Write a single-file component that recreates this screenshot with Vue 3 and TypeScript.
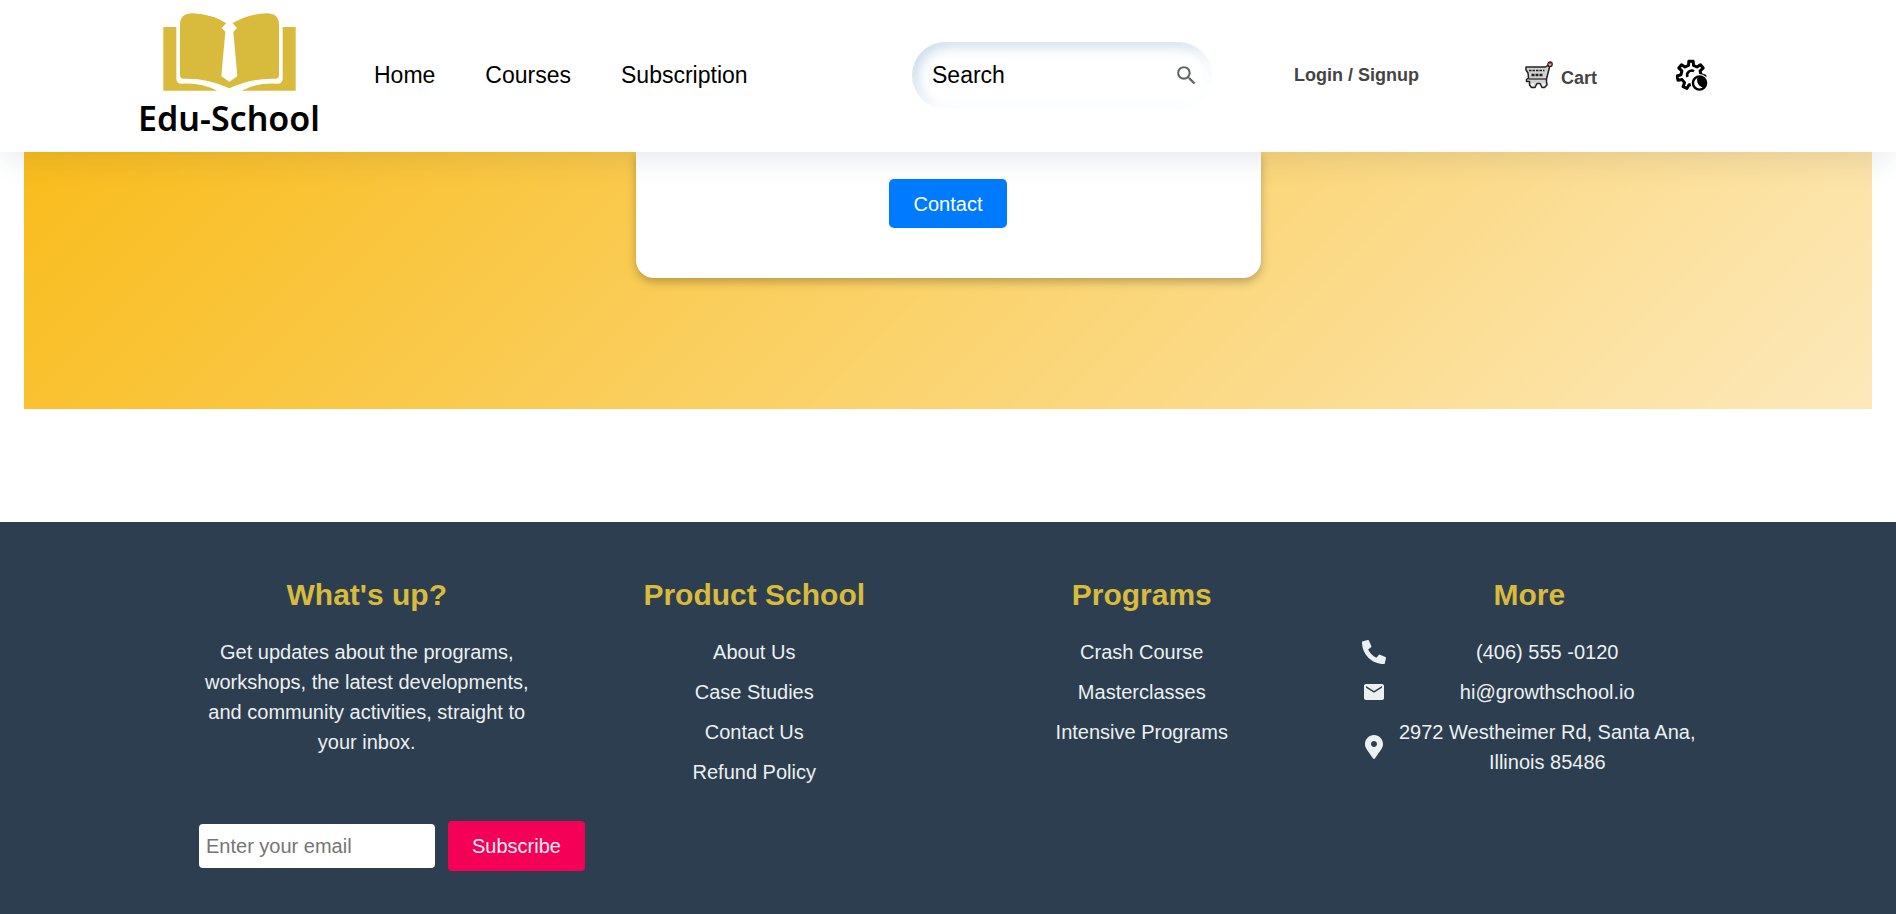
<script setup lang="ts">
import { ref } from 'vue'

interface LinkColumn {
  title: string
  links: string[]
}

const navLinks: string[] = ['Home', 'Courses', 'Subscription']

const columns: LinkColumn[] = [
  { title: 'Product School', links: ['About Us', 'Case Studies', 'Contact Us', 'Refund Policy'] },
  { title: 'Programs', links: ['Crash Course', 'Masterclasses', 'Intensive Programs'] },
]

const query = ref('')
const email = ref('')

// Outline of a cog with flat-topped teeth, centred on (cx, cy).
function cogPath(cx: number, cy: number, teeth: number, outer: number, inner: number): string {
  const step = (Math.PI * 2) / teeth
  const points: string[] = []
  for (let i = 0; i < teeth; i++) {
    const mid = -Math.PI / 2 + i * step
    const corners: [number, number][] = [
      [inner, -0.28],
      [outer, -0.17],
      [outer, 0.17],
      [inner, 0.28],
    ]
    for (const [radius, turn] of corners) {
      const angle = mid + turn * step
      points.push(`${(cx + radius * Math.cos(angle)).toFixed(2)} ${(cy + radius * Math.sin(angle)).toFixed(2)}`)
    }
  }
  return `M${points.join('L')}Z`
}

const cog = cogPath(15, 16, 7, 14, 10)
</script>

<template>
  <div class="page">
    <header class="header">
      <a class="brand" href="#">
        <svg class="brand-mark" viewBox="127 37 399 234" aria-hidden="true">
          <g fill="#d8ba3c">
            <path d="M128 79H167V234Q168 250 184 249Q240 245 290 270H128Z" />
            <path d="M525 79H486V234Q485 250 469 249Q412 245 363 270H525Z" />
            <path d="M178 72Q178 38 216 38Q276 40 326 73Q376 40 437 38Q475 38 475 72V222Q475 235 462 234Q390 232 326 263Q262 232 191 234Q178 235 178 222Z" />
          </g>
          <path fill="#fff" d="M303 82L317 67L326 73L335 67L349 82L338 93L350 227L326 243L302 227L314 93Z" />
        </svg>
        <span class="brand-name">Edu-School</span>
      </a>

      <nav class="nav">
        <a v-for="link in navLinks" :key="link" href="#">{{ link }}</a>
      </nav>

      <div class="tools">
        <form class="search" role="search" @submit.prevent>
          <input v-model="query" type="text" placeholder="Search" aria-label="Search" />
          <button type="submit" aria-label="Submit search">
            <svg viewBox="0 0 24 24" width="25" height="25" aria-hidden="true">
              <path fill="#5f6368" d="M15.5 14h-.79l-.28-.27A6.47 6.47 0 0 0 16 9.5 6.5 6.5 0 1 0 9.5 16c1.61 0 3.09-.59 4.23-1.57l.27.28v.79l5 4.99L20.49 19l-4.99-5zm-6 0C7.01 14 5 11.99 5 9.5S7.01 5 9.5 5 14 7.01 14 9.5 11.99 14 9.5 14z" />
            </svg>
          </button>
        </form>

        <a class="login" href="#">Login / Signup</a>

        <a class="cart" href="#">
          <svg viewBox="0 0 28 28" width="28" height="28" aria-hidden="true">
            <path fill="#d2d2d6" stroke="#222" stroke-width="1.5" stroke-linejoin="round" d="M1 6H20.5L22.5 4.500L24.500 6L21.500 18V20.500L22 24L19.500 26.500H17L15 22.500H12L10 26.500H6.500L4.500 24V20.500H1.500V18.500L3.500 17L3 12L1 9Z" />
            <path stroke="#222" stroke-width="1.500" stroke-dasharray="2.500 1" d="M4 9.500H19.500" />
            <path stroke="#222" stroke-width="2.500" stroke-dasharray="3 1" d="M6.500 14H18" />
            <path stroke="#222" stroke-width="1.200" d="M3.500 18H21" />
            <circle cx="7.500" cy="23.500" r="1.500" fill="#f2f2f4" />
            <circle cx="18.500" cy="23.500" r="1.500" fill="#f2f2f4" />
            <circle cx="25" cy="3.200" r="2.200" fill="#f3b3a3" stroke="#222" stroke-width="1.300" />
            <path stroke="#e0452a" stroke-width="1.200" d="M23.500 2.500H26.500" />
          </svg>
          <span>Cart</span>
        </a>

        <button class="settings" type="button" aria-label="Theme settings">
          <svg viewBox="0 0 32 32" width="32" height="32" aria-hidden="true">
            <path :d="cog" fill="none" stroke="#000" stroke-width="3" stroke-linejoin="round" />
            <path d="M11.500 18A4.600 4.600 0 0 1 18 12.200" fill="none" stroke="#000" stroke-width="2.600" />
            <circle cx="23.500" cy="24" r="9" fill="#fff" />
            <circle cx="23.500" cy="24" r="6.600" fill="#fff" stroke="#000" stroke-width="2.400" />
            <path fill="#000" d="M21.500 17.700A6.600 6.600 0 0 1 28 28.800Q22.500 27.500 21.300 23Q20.700 20 21.500 17.700Z" />
          </svg>
        </button>
      </div>
    </header>

    <main class="main">
      <section class="hero">
        <div class="card">
          <button class="contact" type="button">Contact</button>
        </div>
      </section>
    </main>

    <footer class="footer">
      <div class="footer-grid">
        <section class="column">
          <h2>What's up?</h2>
          <p>Get updates about the programs, workshops, the latest developments, and community activities, straight to your inbox.</p>
          <form class="subscribe" @submit.prevent>
            <input v-model="email" type="email" placeholder="Enter your email" aria-label="Email address" />
            <button type="submit">Subscribe</button>
          </form>
        </section>

        <section v-for="column in columns" :key="column.title" class="column">
          <h2>{{ column.title }}</h2>
          <ul>
            <li v-for="link in column.links" :key="link"><a href="#">{{ link }}</a></li>
          </ul>
        </section>

        <section class="column">
          <h2>More</h2>
          <ul>
            <li class="contact-line">
              <svg viewBox="0 0 512 512" aria-hidden="true">
                <path d="M497.390 361.800l-112-48a24 24 0 0 0-28 6.900l-49.600 60.600A370.660 370.660 0 0 1 130.600 204.110l60.600-49.600a23.940 23.940 0 0 0 6.900-28l-48-112A24.160 24.160 0 0 0 122.600.610l-104 24A24 24 0 0 0 0 48c0 256.500 207.900 464 464 464a24 24 0 0 0 23.400-18.600l24-104a24.290 24.290 0 0 0-14.010-27.600z" />
              </svg>
              <span>(406) 555 -0120</span>
            </li>
            <li class="contact-line">
              <svg viewBox="0 0 24 24" aria-hidden="true">
                <path d="M20 4H4c-1.100 0-2 .9-2 2v12c0 1.100.9 2 2 2h16c1.100 0 2-.9 2-2V6c0-1.100-.9-2-2-2zm0 3.700l-8 5-8-5V6l8 5 8-5v1.700z" />
              </svg>
              <span>hi@growthschool.io</span>
            </li>
            <li class="contact-line">
              <svg viewBox="-64 0 512 512" aria-hidden="true">
                <path d="M172.268 501.670C26.970 291.031 0 269.413 0 192 0 85.961 85.961 0 192 0s192 85.961 192 192c0 77.413-26.970 99.031-172.268 309.670-9.535 13.774-29.930 13.773-39.464 0zM192 256c35 0 64-29 64-64s-29-64-64-64-64 29-64 64 29 64 64 64z" />
              </svg>
              <span>2972 Westheimer Rd, Santa Ana, Illinois 85486</span>
            </li>
          </ul>
        </section>
      </div>
    </footer>
  </div>
</template>

<style>
body {
  margin: 0;
  background: #fff;
}
</style>

<style scoped>
.page {
  display: flex;
  flex-direction: column;
  min-height: 100vh;
  font-family: 'Liberation Sans', Arial, sans-serif;
  font-size: 20px;
  line-height: 30px;
}

a {
  color: inherit;
  text-decoration: none;
}

button,
input {
  box-sizing: border-box;
  border: 0;
  font: inherit;
}

button {
  cursor: pointer;
}

.header {
  position: sticky;
  top: 0;
  z-index: 1;
  display: flex;
  align-items: center;
  box-sizing: border-box;
  height: 152px;
  padding: 0 188px 2px 136px;
  background: #fff;
  box-shadow: 0 13px 27px -5px rgba(50, 60, 90, 0.11);
}

.brand {
  display: flex;
  flex-direction: column;
  align-items: center;
  width: 186px;
  padding-top: 4px;
}

.brand-mark {
  display: block;
  width: 133px;
  height: 78px;
}

.brand-name {
  margin-top: 4px;
  color: #000;
  font-family: 'Noto Sans', sans-serif;
  font-size: 34px;
  font-weight: 600;
  line-height: 46px;
  white-space: nowrap;
}

.nav {
  display: flex;
  gap: 50px;
  margin-left: 52px;
  color: #000;
  font-size: 23px;
}

.tools {
  display: flex;
  align-items: center;
  margin-left: auto;
  color: #444;
  font-size: 18px;
  font-weight: 700;
  white-space: nowrap;
}

.search {
  display: flex;
  align-items: center;
  box-sizing: border-box;
  width: 300px;
  height: 67px;
  padding: 0 13px 0 20px;
  border-radius: 34px;
  font-size: 23px;
  font-weight: 400;
  box-shadow: inset -4px -4px 10px #fff, inset 4px 4px 14px #c5d7e8;
}

.search input {
  flex: 1;
  min-width: 0;
  padding: 0;
  background: none;
  color: #000;
  outline: none;
}

.search input::placeholder {
  color: #000;
  opacity: 1;
}

.search button {
  display: flex;
  padding: 0;
  background: none;
}

.login {
  margin-left: 82px;
}

.cart {
  display: flex;
  align-items: center;
  gap: 8px;
  margin-left: 106px;
}

.cart svg,
.settings svg {
  display: block;
}

.cart span {
  padding-top: 5px;
}

.settings {
  margin-left: 79px;
  padding: 0;
  background: none;
}

.hero {
  display: flex;
  justify-content: center;
  margin: 0 24px 113px;
  padding-bottom: 131px;
  background: linear-gradient(135deg, #f9bc1c, #fce8ba);
}

.card {
  display: flex;
  justify-content: center;
  box-sizing: border-box;
  width: 625px;
  padding: 27px 24px 50px;
  border-radius: 0 0 18px 18px;
  background: #fff;
  box-shadow: 0 4px 10px rgba(0, 0, 0, 0.25);
}

.contact {
  height: 49px;
  padding: 0 25px;
  border-radius: 5px;
  background: #007bff;
  color: #fff;
}

.footer {
  flex: 1;
  padding: 49px 24px 40px;
  background: #2d3e50;
  color: #ecf0f1;
}

.footer-grid {
  display: grid;
  grid-template-columns: repeat(4, minmax(0, 1fr));
  gap: 52px;
  max-width: 1498px;
  margin: 0 auto;
}

.column {
  text-align: center;
}

.column h2 {
  margin: 0 0 19px;
  color: #d8ba3c;
  font-size: 30px;
  line-height: 47px;
}

.column p {
  margin: 0 0 64px;
}

.column ul {
  display: flex;
  flex-direction: column;
  gap: 10px;
  margin: 0;
  padding: 0;
  list-style: none;
}

.contact-line {
  display: flex;
  align-items: center;
  gap: 12px;
}

.contact-line svg {
  flex: none;
  width: 24px;
  height: 24px;
  fill: currentColor;
}

.contact-line span {
  flex: 1;
}

.subscribe {
  display: flex;
  align-items: center;
  gap: 13px;
}

.subscribe input {
  flex: none;
  width: 236px;
  height: 44px;
  padding: 0 7px;
  border-radius: 4px;
  background: #fff;
  color: #222;
}

.subscribe input::placeholder {
  color: #757575;
}

.subscribe button {
  height: 50px;
  padding: 0 24px;
  border-radius: 4px;
  background: #f50057;
  color: #ecf0f1;
}
</style>
